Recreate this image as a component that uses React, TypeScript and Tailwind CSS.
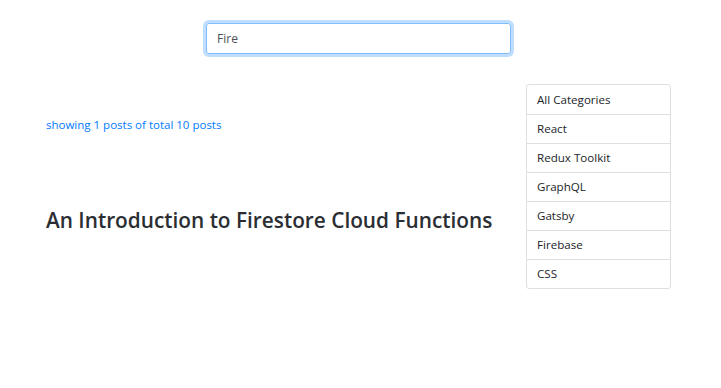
const categories = [
  "All Categories",
  "React",
  "Redux Toolkit",
  "GraphQL",
  "Gatsby",
  "Firebase",
  "CSS",
];

export default function App() {
  return (
    <div className="min-h-[388px] w-[721px] bg-white font-['Open_Sans',sans-serif] text-[#212529]">
      <div className="flex justify-center pt-[23px]">
        <input
          defaultValue="Fire"
          className="ml-[-4px] h-[31px] w-[305px] rounded-[3px] border border-[#80bdff] px-[10px] text-[12px] text-[#495057] shadow-[0_0_0_3px_rgba(0,123,255,0.25)] outline-none"
        />
      </div>
      <div className="mt-[30px] flex pl-[46px]">
        <div className="flex-1">
          <p className="mt-[32px] text-[11.5px] text-[#007bff]">showing 1 posts of total 10 posts</p>
          <h2 className="mt-[72px] text-[20.8px] font-semibold text-[#2a2e33]">An Introduction to Firestore Cloud Functions</h2>
        </div>
        <ul className="mr-[50px] w-[145px] rounded-[3px] border border-[#dfdfdf]">
          {categories.map((c, i) => (
            <li
              key={c}
              className={`flex h-[29px] items-center px-[10px] text-[11.6px] ${i > 0 ? "border-t border-[#dfdfdf]" : ""}`}
            >
              {c}
            </li>
          ))}
        </ul>
      </div>
    </div>
  );
}
